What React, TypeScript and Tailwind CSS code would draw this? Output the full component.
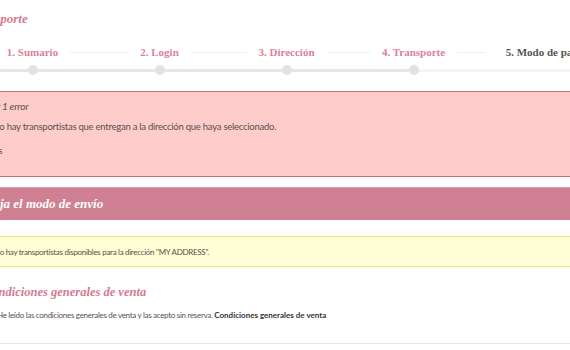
import React from "react";

const serif = { fontFamily: '"Liberation Serif", "DejaVu Serif", serif' };
const sans = { fontFamily: 'Lato, "Open Sans", sans-serif' };

const steps = [
  { label: "1. Sumario", done: true },
  { label: "2. Login", done: true },
  { label: "3. Dirección", done: true },
  { label: "4. Transporte", done: true },
  { label: "5. Modo de pago", done: false },
];

export default function App() {
  return (
    <div className="w-[570px] h-[350px] overflow-hidden bg-white" style={sans}>
      <div className="pt-[10px]">
        <h1
          className="-ml-[31px] text-[13px] leading-[18px] font-bold italic text-[#d67a91] whitespace-nowrap"
          style={serif}
        >
          Transporte
        </h1>

        {/* steps */}
        <div className="mt-[17px] -ml-[31px] flex w-[640px]">
          {steps.map((s, i) => (
            <div key={i} className="w-[127px] shrink-0 flex items-center">
              <div className={`flex-1 h-px mr-[12px] ${i === 0 ? "" : "bg-[#f1f1f1]"}`} />
              <span
                className={`text-[11px] leading-[14px] font-bold whitespace-nowrap ${
                  s.done ? "text-[#dd8197]" : "text-[#555555] ml-[8px]"
                }`}
                style={serif}
              >
                {s.label}
              </span>
              <div className={`flex-1 h-px ml-[12px] ${i === 4 ? "" : "bg-[#f1f1f1]"}`} />
            </div>
          ))}
        </div>
        <div className="mt-[6px] -ml-[31px] flex w-[640px]">
          {steps.map((s, i) => (
            <div key={i} className="w-[127px] shrink-0 flex items-center">
              <div className={`flex-1 h-[3px] ${s.done ? "bg-[#e6e6e6]" : "bg-[#f4f4f4]"}`} />
              <div
                className={`w-[10px] h-[10px] rounded-full shrink-0 ${
                  s.done ? "bg-[#e2e2e2]" : "bg-[#f4f4f4] h-[3px]! rounded-none!"
                }`}
              />
              <div
                className={`flex-1 h-[3px] ${s.done && i < 3 ? "bg-[#e6e6e6]" : "bg-[#f4f4f4]"}`}
              />
            </div>
          ))}
        </div>

        {/* error box */}
        <div className="mt-[16px] border-y border-[#d66d6d] bg-[#ffcccc] h-[86px] pt-[7px] text-[#5a5050] text-[9.5px] tracking-[-0.25px]">
          <p className="-ml-[16px] text-[10px] leading-[14px] italic whitespace-nowrap">Hay 1 error</p>
          <p className="mt-[7px] -ml-[7.5px] leading-[14px] whitespace-nowrap">
            No hay transportistas que entregan a la dirección que haya seleccionado.
          </p>
          <p className="mt-[10px] -ml-[24px] leading-[14px] whitespace-nowrap">« Atrás</p>
        </div>

        {/* header bar */}
        <div className="mt-[10px] h-[33px] bg-[#cf8193] border-t border-[#dba3ae] flex items-center">
          <h2
            className="-ml-[16px] text-[13px] font-bold italic text-white whitespace-nowrap"
            style={serif}
          >
            Elija el modo de envío
          </h2>
        </div>

        {/* warning */}
        <div className="mt-[16px] h-[31px] bg-[#fffed4] border-y border-[#efe58a] flex items-center text-[#5a5050] text-[8px] tracking-[-0.3px]">
          <p className="-ml-[6px] whitespace-nowrap">
            No hay transportistas disponibles para la dirección "MY ADDRESS".
          </p>
        </div>

        {/* conditions */}
        <h3
          className="mt-[16px] -ml-[16px] text-[12.5px] leading-[18px] font-bold italic text-[#d67a91] whitespace-nowrap"
          style={serif}
        >
          Condiciones generales de venta
        </h3>
        <p className="mt-[8px] -ml-[3px] text-[8px] tracking-[-0.3px] leading-[12px] text-[#5a5050] whitespace-nowrap">
          He leído las condiciones generales de venta y las acepto sin reserva.{" "}
          <span className="font-bold text-[#333] tracking-[0px]">Condiciones generales de venta</span>
        </p>
        <div className="mt-[22px] h-px bg-[#e6e6e6]" />
      </div>
    </div>
  );
}
